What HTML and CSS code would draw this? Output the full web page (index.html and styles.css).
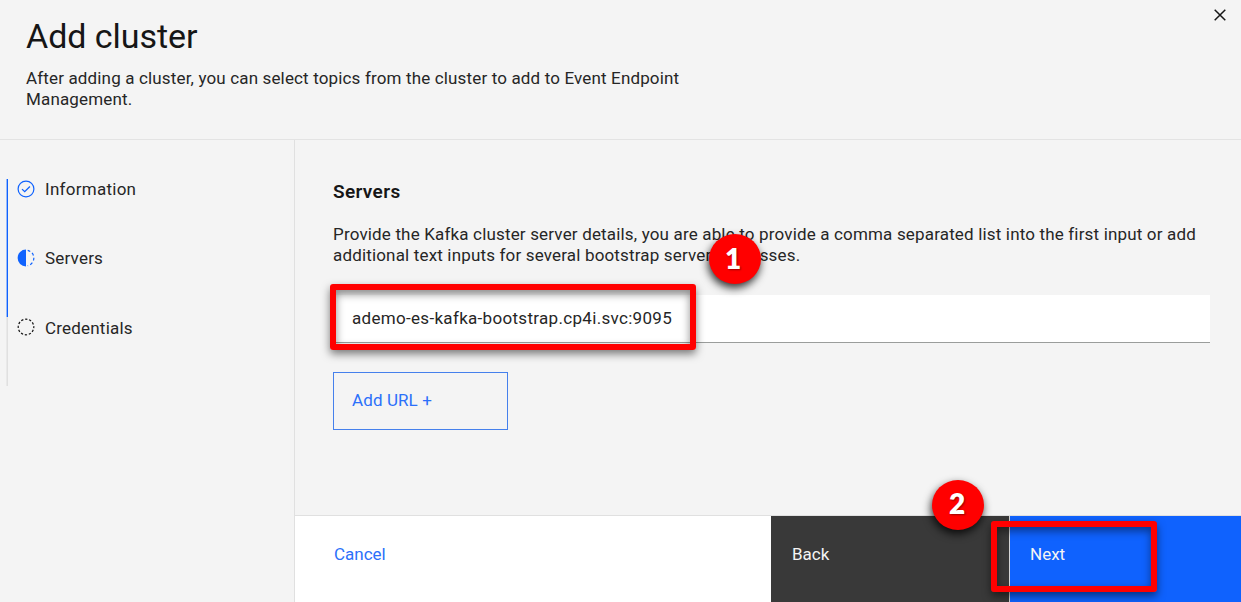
FILE: index.html
```html
<!DOCTYPE html>
<html lang="en">
<head>
<meta charset="utf-8">
<title>Add cluster</title>
<link rel="stylesheet" href="styles.css">
</head>
<body>
<div class="tearsheet">
  <header class="header">
    <div class="heading">
      <h1 class="title">Add cluster</h1>
      <p class="description">After adding a cluster, you can select topics from the cluster to add to Event Endpoint<br>Management.</p>
    </div>
    <button class="close" aria-label="Close">
      <svg width="12" height="12" viewBox="0 0 12 12"><path d="M.7.7l10.6 10.6M11.3.7L.7 11.3" fill="none" stroke="#161616" stroke-width="1.5"/></svg>
    </button>
  </header>
  <div class="body">
    <nav class="sidebar">
      <ol class="steps">
        <li class="step done">
          <svg class="step-icon" width="18" height="18" viewBox="0 0 18 18" fill="none" stroke="#0f62fe"><circle cx="9" cy="9" r="7.9" stroke-width="1.2"/><path d="M5 9.1l2.7 2.6 5.2-5.2" stroke-width="1.3"/></svg>
          <span class="info">Information</span>
        </li>
        <li class="step done">
          <svg class="step-icon" width="18" height="18" viewBox="0 0 18 18"><path d="M9 .6a8.4 8.4 0 0 0 0 16.8z" fill="#0f62fe"/><path d="M10.7 1.3A7.9 7.9 0 0 1 10.7 16.7" fill="none" stroke="#0f62fe" stroke-width="1.2" stroke-dasharray="2.8 2.3"/></svg>
          <span>Servers</span>
        </li>
        <li class="step">
          <svg class="step-icon" width="18" height="18" viewBox="0 0 18 18" fill="none" stroke="#161616"><circle cx="9" cy="9" r="7.8" stroke-width="1.2" stroke-dasharray="2.35 1.734" stroke-dashoffset="1.2"/></svg>
          <span class="pending">Credentials</span>
        </li>
      </ol>
    </nav>
    <section class="main">
      <div class="content">
        <h2 class="section-title">Servers</h2>
        <p class="section-text">Provide the Kafka cluster server details, you are able to provide a comma separated list into the first input or add<br>additional text inputs for several bootstrap server addresses.</p>
        <div class="field"><span class="value">ademo-es-kafka-bootstrap.cp4i.svc:9095</span></div>
        <button class="add-url"><span>Add URL +</span></button>
      </div>
      <footer class="actions">
        <button class="action cancel">Cancel</button>
        <button class="action back">Back</button>
        <button class="action next">Next</button>
      </footer>
    </section>
  </div>
  <div class="callout callout-field"></div>
  <div class="callout callout-next"></div>
  <div class="badge badge-one">1</div>
  <div class="badge badge-two">2</div>
</div>
</body>
</html>
```

FILE: styles.css
```css
* { box-sizing: border-box; }
body { margin: 0; font-family: Roboto, "Liberation Sans", sans-serif; font-size: 17px; line-height: 21.5px; color: #262626; background: #f4f4f4; }
button { font: inherit; margin: 0; padding: 0; border: 0; background: none; text-align: left; }
h1, h2, p, ol { margin: 0; padding: 0; font-weight: 400; }
.tearsheet { position: relative; width: 1241px; height: 602px; overflow: hidden; display: flex; flex-direction: column; white-space: nowrap; }
.header { height: 140px; border-bottom: 1px solid #e3e3e3; display: flex; justify-content: space-between; padding: 0 15px 0 26px; }
.title { margin-top: 15px; font-size: 34px; line-height: 43px; color: #161616; letter-spacing: -.05px; }
.description { margin-top: 9.5px; letter-spacing: .15px; }
.close { height: 12px; margin-top: 9px; display: flex; }
.body { flex: 1; display: flex; }
.sidebar { width: 295px; border-right: 1px solid #e0e0e0; padding: 39px 0 0 7px; }
.steps { list-style: none; }
.step { height: 69px; display: flex; align-items: flex-start; padding-left: 9px; border-left: 1px solid #e0e0e0; box-shadow: -1px 0 rgba(200,200,200,.25); letter-spacing: .2px; }
.step.done { border-left-color: #0f62fe; box-shadow: -1px 0 rgba(15,98,254,.4); }
.pending { margin-top: 1px; }
.step-icon { margin-top: 1px; margin-right: 10px; }
.info { letter-spacing: .27px; }
.main { flex: 1; display: flex; flex-direction: column; }
.content { flex: 1; padding: 40px 31px 0 38px; }
.section-title { font-size: 19px; line-height: 24px; font-weight: 600; color: #161616; letter-spacing: .35px; }
.section-text { margin-top: 19.5px; letter-spacing: .165px; }
.field { margin-top: 28.5px; height: 48px; background: #fff; border-bottom: 1px solid #9a9d9b; display: flex; align-items: center; padding-left: 19px; }
.value { letter-spacing: .31px; }
.add-url { margin-top: 29px; width: 175px; height: 58px; border: 1px solid #4580ec; color: #2b70fa; padding-left: 18px; display: flex; align-items: center; letter-spacing: .1px; }
.actions { height: 87px; border-top: 1px solid #e0e0e0; display: flex; }
.action { padding-top: 27.5px; display: flex; align-items: flex-start; }
.cancel { width: 476px; background: #fff; color: #2b70fa; padding-left: 39px; }
.back { width: 238px; background: #393939; color: #f4f4f4; padding-left: 21px; }
.next { flex: 1; background: #0f62fe; border-left: 1px solid #d5d5d5; color: #f4f4f4; padding-left: 20px; }
.callout { position: absolute; border: 6px solid #f00; border-radius: 3px; box-shadow: 0 4px 8px rgba(0,0,0,.5), inset 0 4px 8px rgba(0,0,0,.45); }
.callout-field { left: 330px; top: 284px; width: 366px; height: 66px; }
.callout-next { left: 991px; top: 521px; width: 166px; height: 71px; }
.badge { position: absolute; width: 52px; height: 50px; border-radius: 50%; background: #f00; color: #fff; font: 800 28px/48px Lato, sans-serif; text-align: center; text-shadow: 1px 1px 2px rgba(0,0,0,.4); box-shadow: -1px 4px 8px rgba(0,0,0,.8); }
.badge-one { left: 709px; top: 234px; padding-right: 4px; }
.badge-two { left: 932px; top: 480px; padding-right: 2px; line-height: 47px; }
```
